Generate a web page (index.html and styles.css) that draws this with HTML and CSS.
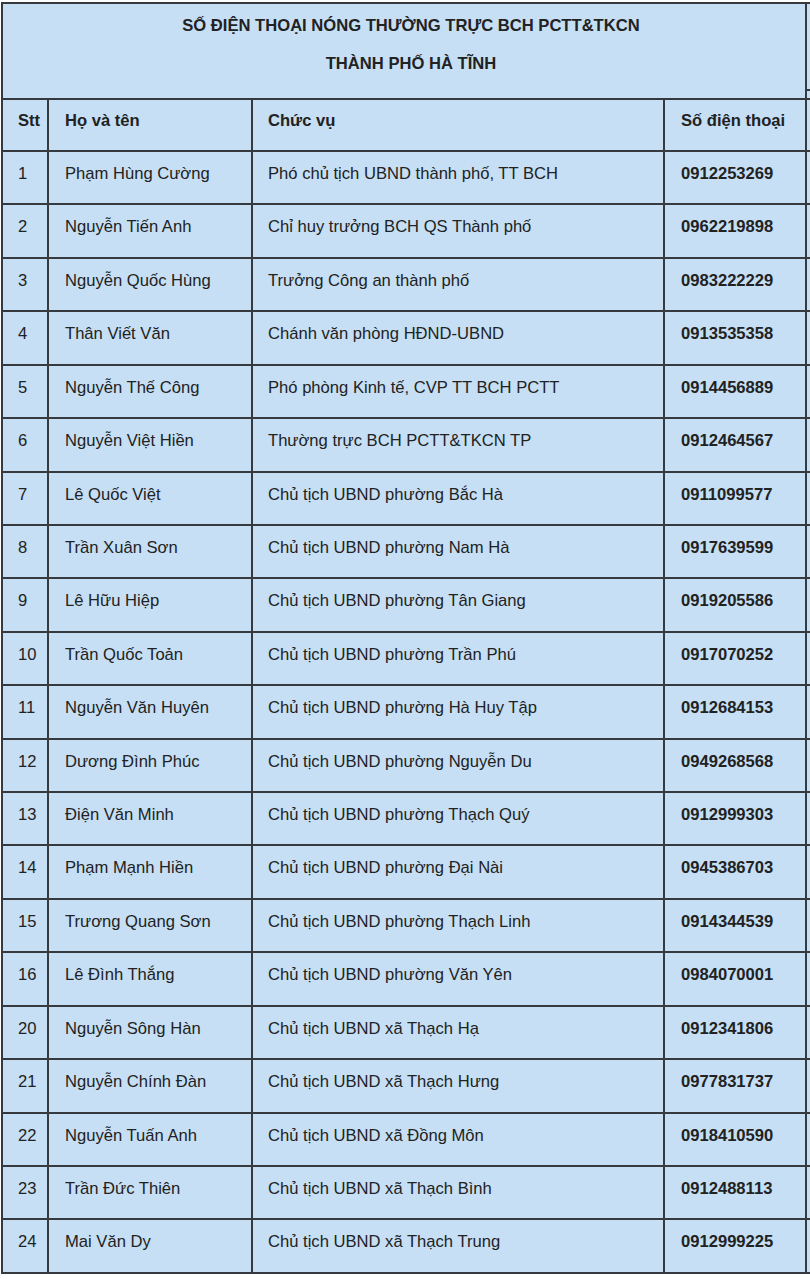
FILE: index.html
```html
<!DOCTYPE html>
<html lang="vi">
<head>
<meta charset="utf-8">
<title>Số điện thoại nóng thường trực BCH PCTT&amp;TKCN</title>
<link rel="stylesheet" href="styles.css">
</head>
<body>
<div class="sheet">
  <div class="cell title">
    <p>SỐ ĐIỆN THOẠI NÓNG THƯỜNG TRỰC BCH PCTT&amp;TKCN</p>
    <p>THÀNH PHỐ HÀ TĨNH</p>
  </div>
  <div class="cell extra extra-title"></div>

  <div class="cell head stt">Stt</div>
  <div class="cell head name">Họ và tên</div>
  <div class="cell head pos">Chức vụ</div>
  <div class="cell head phone">Số điện thoại</div>
  <div class="cell extra"></div>

  <div class="cell stt">1</div><div class="cell name">Phạm Hùng Cường</div><div class="cell pos">Phó chủ tịch UBND thành phố, TT BCH</div><div class="cell phone">0912253269</div><div class="cell extra"></div>
  <div class="cell stt">2</div><div class="cell name">Nguyễn Tiến Anh</div><div class="cell pos">Chỉ huy trưởng BCH QS Thành phố</div><div class="cell phone">0962219898</div><div class="cell extra"></div>
  <div class="cell stt">3</div><div class="cell name">Nguyễn Quốc Hùng</div><div class="cell pos">Trưởng Công an thành phố</div><div class="cell phone">0983222229</div><div class="cell extra"></div>
  <div class="cell stt">4</div><div class="cell name">Thân Viết Văn</div><div class="cell pos">Chánh văn phòng HĐND-UBND</div><div class="cell phone">0913535358</div><div class="cell extra"></div>
  <div class="cell stt">5</div><div class="cell name">Nguyễn Thế Công</div><div class="cell pos">Phó phòng Kinh tế, CVP TT BCH PCTT</div><div class="cell phone">0914456889</div><div class="cell extra"></div>
  <div class="cell stt">6</div><div class="cell name">Nguyễn Việt Hiền</div><div class="cell pos">Thường trực BCH PCTT&amp;TKCN TP</div><div class="cell phone">0912464567</div><div class="cell extra"></div>
  <div class="cell stt">7</div><div class="cell name">Lê Quốc Việt</div><div class="cell pos">Chủ tịch UBND phường Bắc Hà</div><div class="cell phone">0911099577</div><div class="cell extra"></div>
  <div class="cell stt">8</div><div class="cell name">Trần Xuân Sơn</div><div class="cell pos">Chủ tịch UBND phường Nam Hà</div><div class="cell phone">0917639599</div><div class="cell extra"></div>
  <div class="cell stt">9</div><div class="cell name">Lê Hữu Hiệp</div><div class="cell pos">Chủ tịch UBND phường Tân Giang</div><div class="cell phone">0919205586</div><div class="cell extra"></div>
  <div class="cell stt">10</div><div class="cell name">Trần Quốc Toản</div><div class="cell pos">Chủ tịch UBND phường Trần Phú</div><div class="cell phone">0917070252</div><div class="cell extra"></div>
  <div class="cell stt">11</div><div class="cell name">Nguyễn Văn Huyên</div><div class="cell pos">Chủ tịch UBND phường Hà Huy Tập</div><div class="cell phone">0912684153</div><div class="cell extra"></div>
  <div class="cell stt">12</div><div class="cell name">Dương Đình Phúc</div><div class="cell pos">Chủ tịch UBND phường Nguyễn Du</div><div class="cell phone">0949268568</div><div class="cell extra"></div>
  <div class="cell stt">13</div><div class="cell name">Điện Văn Minh</div><div class="cell pos">Chủ tịch UBND phường Thạch Quý</div><div class="cell phone">0912999303</div><div class="cell extra"></div>
  <div class="cell stt">14</div><div class="cell name">Phạm Mạnh Hiền</div><div class="cell pos">Chủ tịch UBND phường Đại Nài</div><div class="cell phone">0945386703</div><div class="cell extra"></div>
  <div class="cell stt">15</div><div class="cell name">Trương Quang Sơn</div><div class="cell pos">Chủ tịch UBND phường Thạch Linh</div><div class="cell phone">0914344539</div><div class="cell extra"></div>
  <div class="cell stt">16</div><div class="cell name">Lê Đình Thắng</div><div class="cell pos">Chủ tịch UBND phường Văn Yên</div><div class="cell phone">0984070001</div><div class="cell extra"></div>
  <div class="cell stt">20</div><div class="cell name">Nguyễn Sông Hàn</div><div class="cell pos">Chủ tịch UBND xã Thạch Hạ</div><div class="cell phone">0912341806</div><div class="cell extra"></div>
  <div class="cell stt">21</div><div class="cell name">Nguyễn Chính Đàn</div><div class="cell pos">Chủ tịch UBND xã Thạch Hưng</div><div class="cell phone">0977831737</div><div class="cell extra"></div>
  <div class="cell stt">22</div><div class="cell name">Nguyễn Tuấn Anh</div><div class="cell pos">Chủ tịch UBND xã Đồng Môn</div><div class="cell phone">0918410590</div><div class="cell extra"></div>
  <div class="cell stt">23</div><div class="cell name">Trần Đức Thiên</div><div class="cell pos">Chủ tịch UBND xã Thạch Bình</div><div class="cell phone">0912488113</div><div class="cell extra"></div>
  <div class="cell stt">24</div><div class="cell name">Mai Văn Dy</div><div class="cell pos">Chủ tịch UBND xã Thạch Trung</div><div class="cell phone">0912999225</div><div class="cell extra"></div>
</div>
</body>
</html>
```

FILE: styles.css
```css
html, body {
  margin: 0;
  padding: 0;
  background: #ffffff;
  overflow: hidden;
}

body {
  width: 810px;
  height: 1279px;
  font-family: "Liberation Sans", Arial, sans-serif;
  font-size: 16.6px;
  line-height: 19px;
  color: #222222;
}

.sheet {
  display: grid;
  grid-template-columns: 44px 202px 410px 140px 30px;
  grid-template-rows: 94px 50px repeat(21, 51.43px);
  gap: 2px;
  padding: 2px;
  margin: 2px 0 0 1px;
  width: max-content;
  background: #363a3e;
}

.cell {
  background: #c6dff5;
  padding: 12px 0 0 16px;
  white-space: nowrap;
}

.title {
  grid-column: 1 / span 4;
  text-align: center;
  font-weight: bold;
  padding: 12px 0 0 14px;
}

.title p {
  margin: 0 0 19px;
}

.extra {
  padding: 0;
}

.extra-title {
  background: linear-gradient(#c6dff5 0, #c6dff5 85px, #363a3e 85px, #363a3e 87px, #c6dff5 87px);
}

.head {
  font-weight: bold;
  padding-top: 11px;
}

.stt {
  padding-left: 15px;
}

.pos {
  padding-left: 15px;
}

.phone {
  font-weight: bold;
}
```
